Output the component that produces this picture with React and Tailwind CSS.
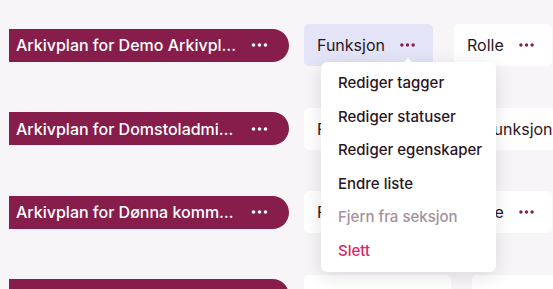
import React from "react";

const font = { fontFamily: "Inter, 'Noto Sans', sans-serif" };

const rows = [
  { title: "Arkivplan for Demo Arkivplan", cards: ["Funksjon", "Rolle"], open: true },
  { title: "Arkivplan for Domstoladministrasjonen", cards: ["Fagområde", "Funksjon"] },
  { title: "Arkivplan for Dønna kommune", cards: ["Funksjon", "Rolle"] },
  { title: "Arkivplan for Eidskog kommune", cards: ["Fagområde", "Funksjon"] },
];

const menu = [
  { label: "Rediger tagger" },
  { label: "Rediger statuser" },
  { label: "Rediger egenskaper" },
  { label: "Endre liste" },
  { label: "Fjern fra seksjon", disabled: true },
  { label: "Slett", danger: true },
];

function Dots({ className }) {
  return (
    <svg viewBox="0 0 16 4" className={className} fill="currentColor">
      <circle cx="2" cy="2" r="1.8" />
      <circle cx="8" cy="2" r="1.8" />
      <circle cx="14" cy="2" r="1.8" />
    </svg>
  );
}

function Card({ label, active, children }) {
  return (
    <div
      className={`relative flex h-[42px] shrink-0 items-center rounded-[5px] pl-[13px] pr-[18px] ${
        active ? "bg-[#e3e4f8]" : "bg-white"
      }`}
    >
      <span className="text-[16px] leading-none text-[#2a1624]">{label}</span>
      <Dots className="ml-[15px] h-[4px] w-[15px] text-[#861d4a]" />
      {children}
    </div>
  );
}

function Menu() {
  return (
    <div className="absolute left-[17px] top-[38px] z-20 w-[175px] rounded-[6px] bg-white py-[4.5px] shadow-[0_4px_18px_rgba(40,20,40,0.13)]">
      {/* little arrow under the dots */}
      <div className="absolute -top-[4px] left-[82px] h-0 w-0 border-x-[5px] border-b-[5px] border-x-transparent border-b-white" />
      {menu.map((item) => (
        <div
          key={item.label}
          className={`flex h-[33.5px] items-center pl-[17px] text-[15px] font-medium ${
            item.disabled ? "text-[#a3919d]" : item.danger ? "text-[#dd2463]" : "text-[#2a1624]"
          }`}
        >
          {item.label}
        </div>
      ))}
    </div>
  );
}

export default function App() {
  return (
    <div
      style={font}
      className="h-[289px] w-[553px] overflow-hidden bg-[#f7f5f8]"
    >
      <div className="flex flex-col gap-[41.5px] pl-[9px] pt-[24px]">
        {rows.map((row) => (
          <div key={row.title} className="flex h-[42px] items-center">
            <div className="flex h-[33px] w-[280px] shrink-0 items-center rounded-l-[4px] rounded-r-full bg-[#861d4a] pl-[7px]">
              <span className="w-[221px] truncate text-[16px] font-medium leading-[20px] text-white">
                {row.title}
              </span>
              <Dots className="ml-[14px] h-[4px] w-[17px] text-white" />
            </div>
            <div className="ml-[15px] flex gap-[21px]">
              {row.cards.map((c, i) => (
                <Card key={c} label={c} active={row.open && i === 0}>
                  {row.open && i === 0 ? <Menu /> : null}
                </Card>
              ))}
            </div>
          </div>
        ))}
      </div>
    </div>
  );
}
